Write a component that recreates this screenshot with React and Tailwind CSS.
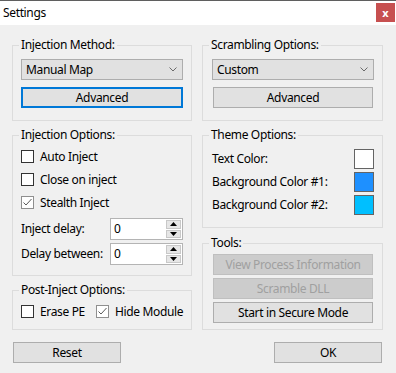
import React from "react";

const font = { fontFamily: '"Noto Sans", "Segoe UI", Arial, sans-serif' };

function Group({ title, children, className = "" }) {
  return (
    <fieldset className={`border border-[#dcdcdc] p-0 m-0 ${className}`}>
      <legend className="ml-[6px] px-[2px] text-[12px] leading-[16px] text-black">{title}</legend>
      {children}
    </fieldset>
  );
}

function Combo({ value }) {
  return (
    <div className="h-[21px] border border-[#adadad] bg-[#e1e1e1] flex items-center justify-between pl-[4px] pr-[5px] text-[12px] text-black">
      <span>{value}</span>
      <svg width="8" height="5" viewBox="0 0 8 5">
        <path d="M0.5 0.5 L4 4 L7.5 0.5" fill="none" stroke="#6a6a6a" strokeWidth="1" />
      </svg>
    </div>
  );
}

function Btn({ children, focus, disabled, className = "" }) {
  const base = "h-[21px] flex items-center justify-center text-[12px] whitespace-nowrap";
  let cls;
  if (focus) cls = "border-2 border-[#0078d7] bg-[#e1e1e1] text-black";
  else if (disabled) cls = "border border-[#bfbfbf] bg-[#cccccc] text-[#a0a0a0]";
  else cls = "border border-[#adadad] bg-[#e1e1e1] text-black";
  return <div className={`${base} ${cls} ${className}`}>{children}</div>;
}

function Check({ label, checked }) {
  return (
    <div className="flex items-center h-[23px] shrink-0 whitespace-nowrap">
      <div
        className={`w-[13px] h-[13px] shrink-0 bg-white border flex items-center justify-center ${
          checked ? "border-[#8f8f8f]" : "border-[#333333]"
        }`}
      >
        {checked && (
          <svg width="11" height="11" viewBox="0 0 11 11">
            <path d="M1.5 5.5 L4 8 L9.5 2" fill="none" stroke="#5a5a5a" strokeWidth="1" />
          </svg>
        )}
      </div>
      <span className="ml-[6px] text-[12px] text-black">{label}</span>
    </div>
  );
}

function Spinner() {
  return (
    <div className="w-[73px] h-[22px] border border-[#b4b4b4] bg-white flex items-stretch p-px">
      <div className="flex-1 text-[12px] leading-[18px] pl-[2px] text-black">0</div>
      <div className="w-[15px] flex flex-col gap-px">
        <div className="flex-1 bg-[#e6e6e6] border border-[#c8c8c8] flex items-center justify-center">
          <svg width="7" height="4" viewBox="0 0 7 4">
            <path d="M0 4 L3.5 0 L7 4 Z" fill="#000" />
          </svg>
        </div>
        <div className="flex-1 bg-[#e6e6e6] border border-[#c8c8c8] flex items-center justify-center">
          <svg width="7" height="4" viewBox="0 0 7 4">
            <path d="M0 0 L7 0 L3.5 4 Z" fill="#000" />
          </svg>
        </div>
      </div>
    </div>
  );
}

function ColorRow({ label, color }) {
  return (
    <div className="flex items-center justify-between h-[20px]">
      <span className="text-[12px] text-black">{label}</span>
      <div className={`w-[20px] h-[20px] border border-[#646464] ${color}`} />
    </div>
  );
}

export default function App() {
  return (
    <div className="w-[396px] h-[373px] bg-[#f0f0f0] flex flex-col tracking-[-0.35px]" style={font}>
      {/* Title bar */}
      <div className="h-[25px] bg-white border-t border-[#5f5f5f] flex items-start justify-between">
        <span className="ml-[3px] mt-[4px] text-[12px] leading-[16px] text-black">Settings</span>
        <div className="mt-[2px] mr-px w-[19px] h-[19px] bg-[#c75050] flex items-center justify-center">
          <span className="text-white text-[11px] font-bold leading-none tracking-normal">x</span>
        </div>
      </div>

      {/* Body */}
      <div className="flex gap-[10px] pl-[12px] pt-[12px]">
        {/* Left column */}
        <div className="w-[180px] flex flex-col gap-[6px]">
          <Group title="Injection Method:">
            <div className="px-[8px] pt-[6px] pb-[12px] flex flex-col gap-[7px]">
              <Combo value="Manual Map" />
              <Btn focus>Advanced</Btn>
            </div>
          </Group>
          <Group title="Injection Options:">
            <div className="px-[8px] pt-[2px] pb-[10px] flex flex-col">
              <Check label="Auto Inject" />
              <Check label="Close on inject" />
              <Check label="Stealth Inject" checked />
              <div className="mt-[4px] flex flex-col gap-[3px]">
                <div className="flex items-center justify-between">
                  <span className="text-[12px] text-black">Inject delay:</span>
                  <Spinner />
                </div>
                <div className="flex items-center justify-between">
                  <span className="text-[12px] text-black">Delay between:</span>
                  <Spinner />
                </div>
              </div>
            </div>
          </Group>
          <Group title="Post-Inject Options:">
            <div className="px-[8px] pt-[2px] pb-[6px] flex">
              <div className="w-[75px] shrink-0">
                <Check label="Erase PE" />
              </div>
              <Check label="Hide Module" checked />
            </div>
          </Group>
        </div>

        {/* Right column */}
        <div className="w-[181px] flex flex-col">
          <Group title="Scrambling Options:">
            <div className="pl-[9px] pr-[8px] pt-[6px] pb-[12px] flex flex-col gap-[7px]">
              <Combo value="Custom" />
              <Btn className="mx-px">Advanced</Btn>
            </div>
          </Group>
          <Group title="Theme Options:" className="mt-[6px]">
            <div className="pl-[9px] pr-[8px] pt-[6px] pb-[12px] flex flex-col gap-[3px]">
              <ColorRow label="Text Color:" color="bg-white" />
              <ColorRow label="Background Color #1:" color="bg-[#1e90ff]" />
              <ColorRow label="Background Color #2:" color="bg-[#00bfff]" />
            </div>
          </Group>
          <Group title="Tools:" className="mt-[7px]">
            <div className="pl-[10px] pr-[9px] pt-[3px] pb-[6px] flex flex-col gap-[3px]">
              <Btn disabled>View Process Information</Btn>
              <Btn disabled>Scramble DLL</Btn>
              <Btn>Start in Secure Mode</Btn>
            </div>
          </Group>
        </div>
      </div>

      {/* Bottom buttons */}
      <div className="flex justify-between pl-[13px] pr-[14px] mt-[12px]">
        <Btn className="w-[108px]">Reset</Btn>
        <Btn className="w-[108px]">OK</Btn>
      </div>
    </div>
  );
}
